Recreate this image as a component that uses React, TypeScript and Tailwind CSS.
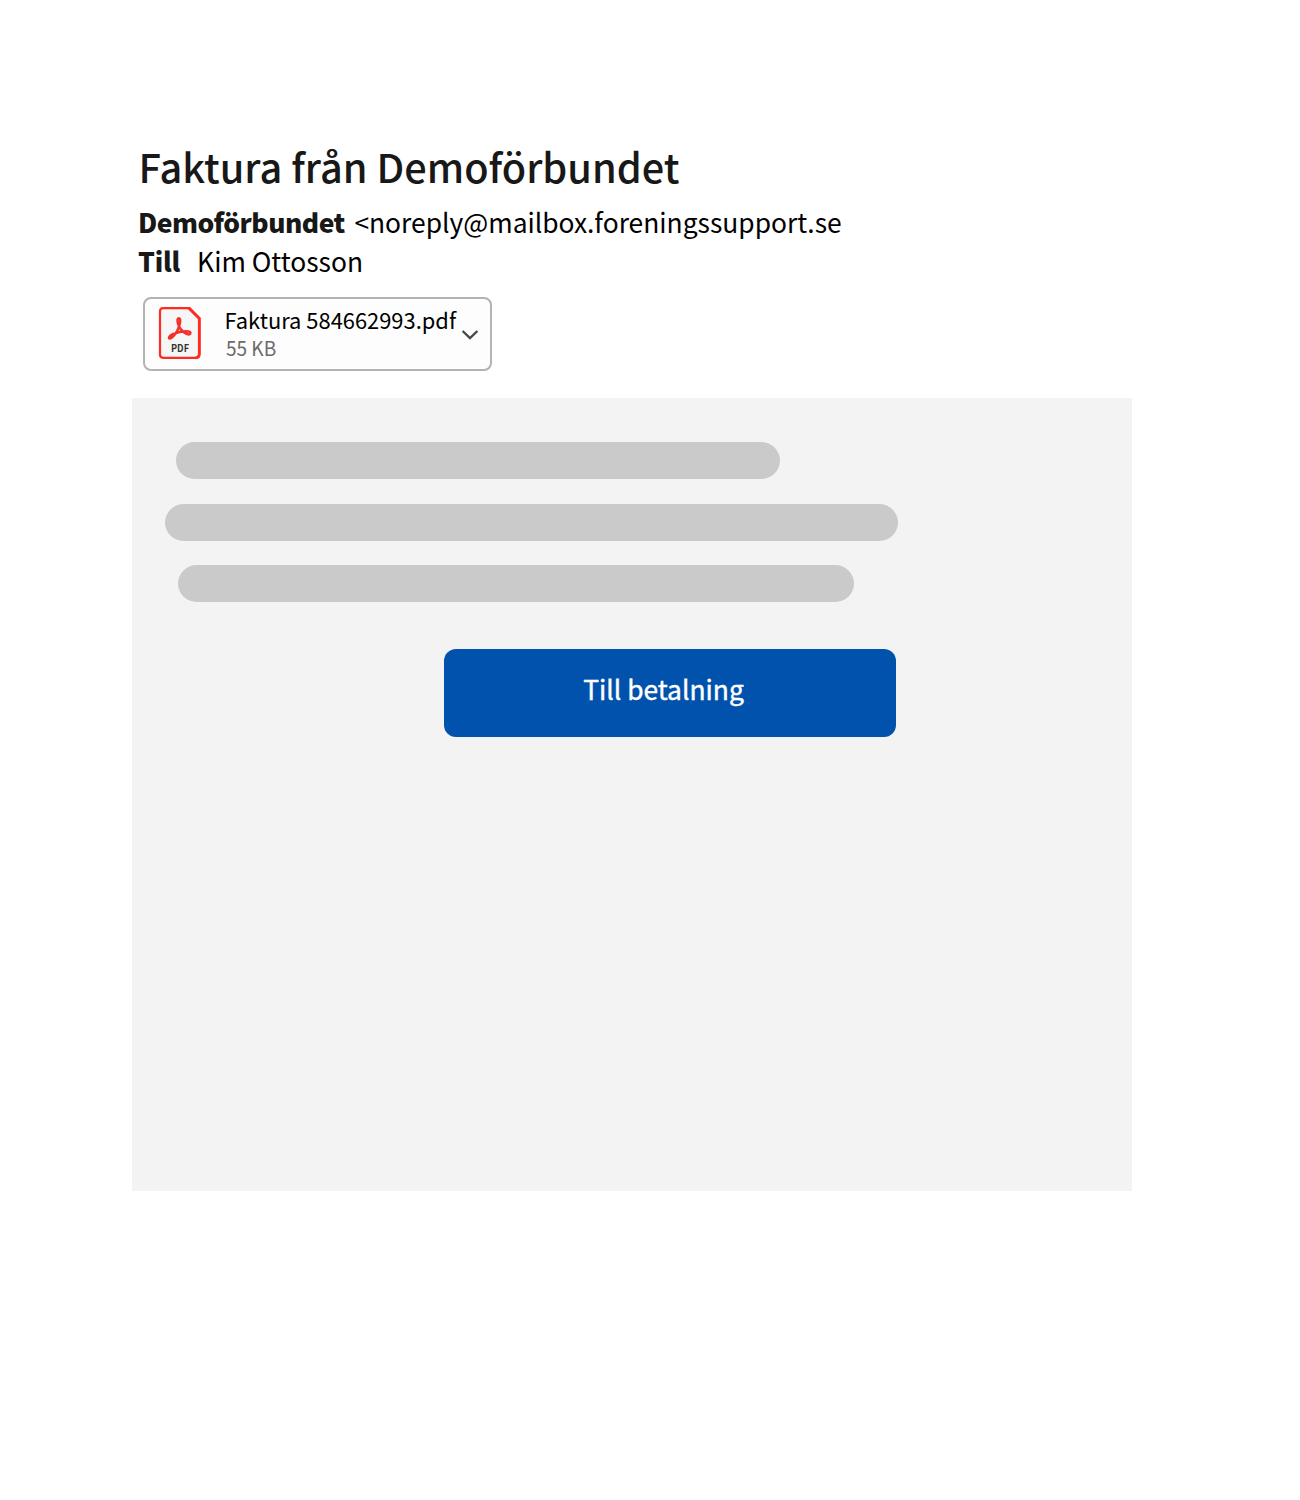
const lines = [
  { id: 1, className: "ml-[44.4px] w-[604px]" },
  { id: 2, className: "ml-[33px] w-[733px]" },
  { id: 3, className: "ml-[45.5px] w-[676.5px]" },
];

function PdfIcon() {
  return (
    <svg width="44" height="54" viewBox="0 0 44 54" fill="none" className="mb-[3px] shrink-0">
      <path
        d="M5 2.2H31.5L41.3 12V48Q41.3 51.8 37.5 51.8H5Q2 51.8 2 48.6V5.4Q2 2.2 5 2.2Z"
        fill="#f6f6f6"
        stroke="#ff2a20"
        strokeWidth="2.2"
      />
      <path d="M31 2.2L41.3 12.5V48Q41.3 51.8 37.5 51.8" stroke="#ff2a20" strokeWidth="2.8" />
      <path
        d="M20.8 12.2C18.6 12.2 19.6 17.6 21 20.4C19.4 25.4 15.6 30.4 13 32.2C10.2 33.6 10 30.4 14.6 28.2C20 26 26.4 25 30.4 25.4C34 26.2 32.4 29.6 28.6 27.8C25 26 22.4 23.4 21 20.4C22.2 17.4 23 12.2 20.8 12.2Z"
        stroke="#f5302a"
        strokeWidth="2.5"
        strokeLinejoin="round"
      />
      <text x="13" y="46" textLength="18" lengthAdjust="spacingAndGlyphs" fontSize="10.5" className="font-bold" fill="#333">
        PDF
      </text>
    </svg>
  );
}

export default function App() {
  return (
    <div className="min-h-[1500px] w-[1300px] bg-white pl-[132px] pt-[137px] font-['Noto_Sans_CJK_JP',sans-serif] text-[#181818]">
      <header className="pl-[6px]">
        <h1 className="h-[58px] whitespace-nowrap pl-[0.5px] text-[39.7px] font-medium leading-[58px]">
          Faktura från Demoförbundet
        </h1>
        <div className="mt-[7px] flex h-[39px] items-center gap-[9.5px] whitespace-nowrap text-[26.4px] leading-[39px]">
          <span className="font-black tracking-[-0.5px]">Demoförbundet</span>
          <span className="text-black">&lt;noreply@mailbox.foreningssupport.se</span>
        </div>
        <div className="flex h-[40px] items-center gap-[17px] whitespace-nowrap text-[26.4px] leading-[40px]">
          <span className="font-black tracking-[-0.2px]">Till</span>
          <span className="text-black">Kim Ottosson</span>
        </div>
      </header>

      <button className="ml-[11px] mt-[16px] flex h-[74px] w-[349px] items-center rounded-lg border-2 border-[#b3b3b3] bg-[#fdfdfd] pl-[13px] text-left">
        <PdfIcon />
        <div className="ml-[22.5px] w-[232px] shrink-0 whitespace-nowrap">
          <div className="text-[21.9px] leading-[26px] text-black">Faktura 584662993.pdf</div>
          <div className="origin-left scale-x-[0.93] pl-px text-[20.5px] leading-[28px] text-[#6b6b6b]">
            55 KB
          </div>
        </div>
        <svg width="18" height="12" viewBox="0 0 18 12" fill="none" className="ml-[4px] mt-[2px] shrink-0">
          <path d="M1.6 2L9 9.2L16.4 2" stroke="#484848" strokeWidth="2.4" />
        </svg>
      </button>

      <main className="mt-[27px] h-[793px] w-[1000px] bg-[#f3f3f3] pt-[44px]">
        <div className="flex flex-col gap-[24.5px]">
          {lines.map((line) => (
            <div key={line.id} className={`h-[37px] rounded-full bg-[#cacaca] ${line.className}`} />
          ))}
        </div>
        <button className="ml-[312px] mt-[46.5px] flex h-[88.5px] w-[452px] items-center justify-center rounded-xl bg-[#0052ac] pb-[7px] pr-[13px] text-[26.4px] text-white [-webkit-text-stroke:0.4px_white]">
          Till betalning
        </button>
      </main>
    </div>
  );
}
